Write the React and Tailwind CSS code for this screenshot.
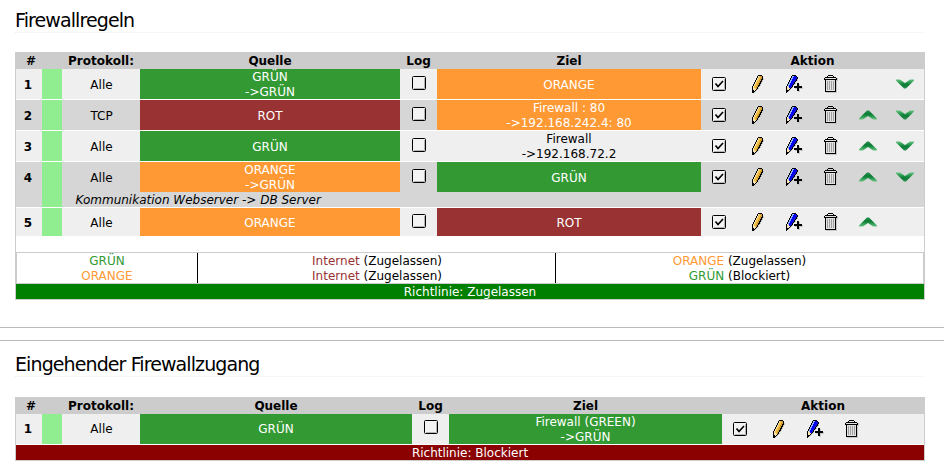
import React from "react";

const PENCIL = [
  "......KKKK..",
  ".....KWYOOK.",
  ".....KWYYOK.",
  "....KWYYOOKs",
  "....KWYYOKKs",
  "...KWYYOOKs.",
  "...KWYYOKKs.",
  "..KWYYOOKs..",
  "..KWYYOKKs..",
  ".KWYYOOKs...",
  ".KWYYOKKs...",
  "KWYYOOKs....",
  "KPYYOKs.....",
  "KPPYOKs.....",
  "KPPPKs......",
  "KKPKs.......",
  "KKKs........",
  "KKs.........",
];

const CLONE = [
  "......KKKK.......",
  ".....KLLBBK......",
  ".....KLBBDDK.....",
  "....KLLBBDDK.....",
  "....KLBBDDKs.....",
  "...KLLBBDDKs.....",
  "...KLBBDDKs......",
  "..KLLBBDKs.......",
  "..KLBBDDKs.KK....",
  ".KLLBBDKs..KKs...",
  ".KLBBDKs...KKs...",
  "KPLBDDK.KKKKKKKK.",
  "KPPBDKs.KKKKKKKKs",
  "KPPPKs...ssKKssss",
  "KPPKs......KKs...",
  "KKKs.......KKs...",
  "KKs.........ss...",
  "K................",
];

const TRASH = [
  "....KKKKK.....",
  "...K.....K....",
  ".KKKKKKKKKKK..",
  "KWWWWWWWWWWWKs",
  "KKKKKKKKKKKKKs",
  ".KWWWWWWWWWKss",
  ".KWGWGWGWGWKs.",
  ".KWGWGWGWGWKs.",
  ".KWGWGWGWGWKs.",
  ".KWGWGWGWGWKs.",
  ".KWGWGWGWGWKs.",
  ".KWGWGWGWGWKs.",
  ".KWGWGWGWGWKs.",
  ".KWGWGWGWGWKs.",
  ".KWGWGWGWGWKs.",
  ".KWWWWWWWWWKs.",
  ".KKKKKKKKKKKs.",
  "..sssssssssss.",
];

const COLORS = {
  K: "#000000",
  W: "#f9e2a8",
  Y: "#f0c048",
  O: "#cf9a2a",
  P: "#fbe3b5",
  L: "#8cb4ff",
  B: "#0000ff",
  D: "#1010d8",
  G: "#a0a0a0",
  s: "#c8c8c8",
};
const TRASH_COLORS = { ...COLORS, W: "#e2e2e2" };

function Pixels({ rows, colors = COLORS }) {
  return (
    <svg
      width={rows[0].length}
      height={rows.length}
      shapeRendering="crispEdges"
      className="block shrink-0"
    >
      {rows.flatMap((row, y) =>
        [...row].map((c, x) =>
          c === "." ? null : (
            <rect key={x + "-" + y} x={x} y={y} width="1" height="1" fill={colors[c]} />
          )
        )
      )}
    </svg>
  );
}

function Box({ checked }) {
  return (
    <svg width="14" height="14" className="block shrink-0">
      <rect x="0.5" y="0.5" width="13" height="13" rx="1" fill="#f3f3f3" stroke="#000" />
      <path d="M2 12.5H12.5V2" fill="none" stroke="#b4b4b4" />
      {checked && (
        <path d="M3.5 6.5L6 9.5L11 4" fill="none" stroke="#000" strokeWidth="1.7" />
      )}
    </svg>
  );
}

function Chevron({ down }) {
  return (
    <svg width="18" height="10" viewBox="0 0 18 10" className={down ? "block" : "block rotate-180"}>
      <defs>
        <linearGradient id="chev" x1="0" y1="0" x2="0" y2="1">
          <stop offset="0" stopColor="#6cc486" />
          <stop offset="0.3" stopColor="#2f9f55" />
          <stop offset="0.6" stopColor="#0a7a34" />
          <stop offset="1" stopColor="#2a9050" />
        </linearGradient>
      </defs>
      <path d="M0 0.5H4L9 4L14 0.5H18V1.5L10 9.5H8L0 1.5Z" fill="url(#chev)" />
    </svg>
  );
}

const FILL = {
  green: "bg-[#339933] text-white",
  orange: "bg-[#ff9933] text-white",
  red: "bg-[#993333] text-white",
  none: "",
};

function Target({ lines, color, width, single }) {
  return (
    <div
      className={`flex flex-col justify-center text-center ${lines.length > 1 ? "pt-[2px]" : single} ${width} ${FILL[color]}`}
    >
      {lines.map((l) => (
        <div key={l}>{l}</div>
      ))}
    </div>
  );
}

function Header({ quelle, ziel }) {
  return (
    <div className="flex h-4 bg-[#cccccc] font-bold text-center leading-4">
      <div className="w-[30px]">#</div>
      <div className="w-[16px]" />
      <div className="w-[78px]">Protokoll:</div>
      <div className={quelle}>Quelle</div>
      <div className="w-[37px]">Log</div>
      <div className={ziel}>Ziel</div>
      <div className="flex-1">Aktion</div>
    </div>
  );
}

function Row({ n, proto, from, to, remark, up, down, quelle, ziel, log, single, num, short, last }) {
  return (
    <div
      className={`flex ${n % 2 ? "bg-[#efefef]" : "bg-[#d6d6d6]"} ${last ? "" : "border-b border-white"}`}
    >
      <div
        className={`flex w-[26px] shrink-0 justify-center pr-[2px] font-bold ${short ? "pt-[8px]" : num}`}
      >
        {n}
      </div>
      <div className="w-[20px] shrink-0 bg-[#90ee90]" />
      <div className="flex flex-1 flex-col">
        <div className={`flex ${short ? "h-7" : "h-[30px]"}`}>
          <div className={`flex w-[78px] items-center justify-center pl-px ${single}`}>{proto}</div>
          <Target lines={from[1]} color={from[0]} width={quelle} single={single} />
          <div className={`flex w-[37px] items-center pl-[12px] ${log}`}>
            <Box />
          </div>
          <Target lines={to[1]} color={to[0]} width={ziel} single={single} />
          <div className="flex w-[37px] items-center pl-[11px]"><Box checked /></div>
          <div className="flex w-[37px] items-center pl-[14px]"><Pixels rows={PENCIL} /></div>
          <div className="flex w-[37px] items-center pl-[11px]"><Pixels rows={CLONE} /></div>
          <div className="flex w-[38px] items-center pl-[12px]"><Pixels rows={TRASH} colors={TRASH_COLORS} /></div>
          {up !== undefined && (
            <>
              <div className="flex w-[37px] items-center pl-[9px]">{up && <Chevron />}</div>
              <div className="flex w-[37px] items-center pl-[9px]">{down && <Chevron down />}</div>
            </>
          )}
        </div>
        {remark && <div className="h-[15px] pl-[13.5px] italic leading-[17px]">{remark}</div>}
      </div>
    </div>
  );
}

function Title({ children }) {
  return (
    <h1 className="ml-[15px] mr-5 h-[25px] border-b border-dotted border-[#eeeeee] text-[19px] leading-[24px] tracking-[-0.9px]">
      {children}
    </h1>
  );
}

const G = ({ children }) => <span className="text-[#339933]">{children}</span>;
const O = ({ children }) => <span className="text-[#ff9933]">{children}</span>;
const R = ({ children }) => <span className="text-[#993333]">{children}</span>;

export default function App() {
  const a = { quelle: "w-[260px]", ziel: "w-[264px]", log: "pb-[2px]", single: "pt-[2px]", num: "pt-[9px]" };
  const b = { quelle: "w-[272px]", ziel: "w-[273px]", log: "pb-[4px]", single: "pt-0", num: "pt-[8px]" };
  return (
    <div className="h-[475px] overflow-hidden bg-white font-['DejaVu_Sans',sans-serif] text-[12px] leading-[15px] text-black">
      <div className="h-2" />
      <Title>Firewallregeln</Title>
      <div className="ml-[15px] mt-[19px] w-[910px] border border-[#cccccc]">
        <Header {...a} />
        <Row n={1} proto="Alle" from={["green", ["GRÜN", "->GRÜN"]]} to={["orange", ["ORANGE"]]} up={false} down {...a} />
        <Row n={2} proto="TCP" from={["red", ["ROT"]]} to={["orange", ["Firewall : 80", "->192.168.242.4: 80"]]} up down {...a} />
        <Row n={3} proto="Alle" from={["green", ["GRÜN"]]} to={["none", ["Firewall", "->192.168.72.2"]]} up down {...a} />
        <Row n={4} proto="Alle" from={["orange", ["ORANGE", "->GRÜN"]]} to={["green", ["GRÜN"]]} remark="Kommunikation Webserver -> DB Server" up down {...a} />
        <Row n={5} proto="Alle" from={["orange", ["ORANGE"]]} to={["red", ["ROT"]]} up down={false} short last {...a} />
        <div className="mt-4 flex h-8 border border-[#cccccc] text-center">
          <div className="w-[181px] border-r border-black pt-px">
            <div><G>GRÜN</G></div>
            <div><O>ORANGE</O></div>
          </div>
          <div className="w-[358px] border-r border-black pt-px pl-px">
            <div><R>Internet</R> (Zugelassen)</div>
            <div><R>Internet</R> (Zugelassen)</div>
          </div>
          <div className="flex-1 pt-px">
            <div><O>ORANGE</O> (Zugelassen)</div>
            <div><G>GRÜN</G> (Blockiert)</div>
          </div>
        </div>
        <div className="h-[15px] bg-[#008000] text-center leading-[17px] text-white">Richtlinie: Zugelassen</div>
      </div>
      <div className="mt-[27px] h-[14px] border-y border-[#bbbbbb]" />
      <div className="h-[11px]" />
      <Title>Eingehender Firewallzugang</Title>
      <div className="ml-[15px] mt-5 w-[910px] border border-[#cccccc]">
        <Header {...b} />
        <Row n={1} proto="Alle" from={["green", ["GRÜN"]]} to={["green", ["Firewall (GREEN)", "->GRÜN"]]} {...b} />
        <div className="h-[15px] bg-[#8b0000] text-center leading-[17px] text-white">Richtlinie: Blockiert</div>
      </div>
    </div>
  );
}
